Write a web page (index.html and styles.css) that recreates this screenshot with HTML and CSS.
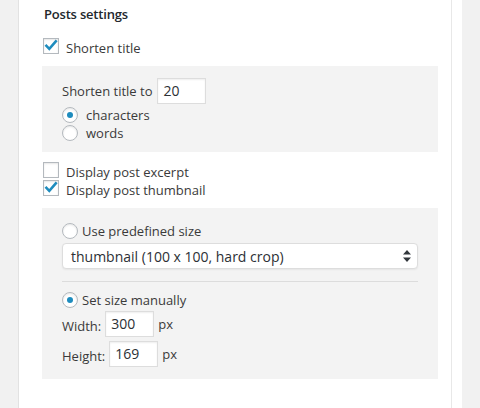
FILE: index.html
```html
<!DOCTYPE html>
<html lang="en">
<head>
<meta charset="utf-8">
<title>Posts settings</title>
<link rel="stylesheet" href="styles.css">
</head>
<body>
<div class="page">
  <div class="panel">
    <h3 class="title">Posts settings</h3>

    <label class="check-row first">
      <span class="cb"><svg viewBox="0 0 16 16" width="16" height="16"><path d="M3.4 7.8 L6.3 10.8 L12.8 3.4" fill="none" stroke="#1e8cbe" stroke-width="2.6" stroke-linecap="square"/></svg></span>
      <span class="lbl">Shorten title</span>
    </label>

    <div class="box box1">
      <div class="field-row">
        <span class="flabel">Shorten title to</span>
        <span class="input">20</span>
      </div>
      <label class="radio-row"><span class="rb on"></span><span class="rlbl">characters</span></label>
      <label class="radio-row"><span class="rb"></span><span class="rlbl">words</span></label>
    </div>

    <label class="check-row after-box">
      <span class="cb"></span>
      <span class="lbl">Display post excerpt</span>
    </label>
    <label class="check-row">
      <span class="cb"><svg viewBox="0 0 16 16" width="16" height="16"><path d="M3.4 7.8 L6.3 10.8 L12.8 3.4" fill="none" stroke="#1e8cbe" stroke-width="2.6" stroke-linecap="square"/></svg></span>
      <span class="lbl">Display post thumbnail</span>
    </label>

    <div class="box box2">
      <label class="radio-row"><span class="rb"></span><span class="rlbl">Use predefined size</span></label>
      <div class="select">
        <span class="select-text">thumbnail (100 x 100, hard crop)</span>
        <svg class="arrows" viewBox="0 0 8 12" width="8" height="12"><path d="M4 0 L8 4.5 L0 4.5 Z M0 7.5 L8 7.5 L4 12 Z" fill="#32373c"/></svg>
      </div>
      <div class="sep"></div>
      <label class="radio-row manual"><span class="rb on"></span><span class="rlbl">Set size manually</span></label>
      <div class="size-row">
        <span class="slabel">Width:</span>
        <span class="input">300</span>
        <span class="unit">px</span>
      </div>
      <div class="size-row second">
        <span class="slabel">Height:</span>
        <span class="input">169</span>
        <span class="unit">px</span>
      </div>
    </div>
  </div>
</div>
</body>
</html>
```

FILE: styles.css
```css
html, body {
  margin: 0;
  padding: 0;
  background: #f1f1f1;
}
body {
  font-family: "Open Sans", "Liberation Sans", sans-serif;
  font-size: 13px;
  color: #3a3a3a;
}
.page {
  margin-left: 18px;
  width: 443px;
  height: 408px;
  background: #fff;
  border-left: 1px solid #e2e2e2;
}
.panel {
  width: 433px;
  height: 408px;
  border-right: 1px solid #e8e8e8;
  padding: 0 13px 0 23px;
  box-sizing: border-box;
}
.title {
  margin: 0;
  padding-top: 5px;
  font-size: 13px;
  font-weight: 600;
  line-height: 18px;
  height: 18px;
  padding-left: 2px;
  letter-spacing: -0.2px;
  color: #23282d;
}
.check-row {
  display: flex;
  align-items: flex-start;
  height: 18px;
  line-height: 18px;
  padding-left: 1px;
}
.check-row.first { margin-top: 15px; }
.check-row.after-box { margin-top: 10px; }
.cb {
  width: 14px;
  height: 14px;
  border: 1px solid #b4b9be;
  background: #fff;
  box-shadow: inset 0 1px 2px rgba(0,0,0,.1);
  flex: none;
  margin-right: 7px;
  position: relative;
}
.cb svg {
  position: absolute;
  left: -1px;
  top: -1px;
}
.lbl { padding-top: 1px; }

.box {
  background: #f3f3f3;
  padding: 0 20px;
}
.box1 {
  margin-top: 10px;
  padding-top: 12px;
  padding-bottom: 10px;
}
.box2 {
  margin-top: 10px;
  padding-top: 14px;
  padding-bottom: 12px;
}
.field-row {
  display: flex;
  align-items: center;
  height: 26px;
}
.flabel { margin-right: 5px; }
.input {
  display: block;
  box-sizing: border-box;
  width: 49px;
  height: 26px;
  line-height: 24px;
  border: 1px solid #ddd;
  background: #fff;
  box-shadow: inset 0 1px 2px rgba(0,0,0,.07);
  padding: 0 5px;
  color: #2c3035;
  font-size: 14px;
}
.radio-row {
  display: flex;
  align-items: center;
  height: 18px;
  line-height: 18px;
}
.box1 .radio-row:first-of-type { margin-top: 2px; }
.rb {
  width: 14px;
  height: 14px;
  border: 1px solid #b4b9be;
  border-radius: 50%;
  background: #fff;
  box-shadow: inset 0 1px 2px rgba(0,0,0,.1);
  flex: none;
  margin-right: 8px;
  position: relative;
}
.rb.on::after {
  content: "";
  position: absolute;
  left: 4px;
  top: 4px;
  width: 6px;
  height: 6px;
  border-radius: 50%;
  background: #1e8cbe;
}
.box2 .radio-row .rb { margin-right: 4px; }
.select {
  margin-top: 3px;
  height: 26px;
  box-sizing: border-box;
  border: 1px solid #ddd;
  border-radius: 4px;
  background: #fff;
  box-shadow: 0 1px 2px rgba(0,0,0,.06);
  display: flex;
  align-items: center;
  justify-content: space-between;
  padding: 0 6px 0 8px;
  color: #2c3035;
  font-size: 14px;
}
.arrows { display: block; }
.sep {
  margin-top: 12px;
  border-top: 1px solid #dcdcdc;
}
.radio-row.manual { margin-top: 9px; }
.size-row {
  display: flex;
  align-items: center;
  height: 26px;
  margin-top: 2px;
}
.size-row.second { margin-top: 4px; }
.slabel {
  margin-right: 4px;
  padding-top: 4px;
}
.unit { margin-left: 4px; }
```
